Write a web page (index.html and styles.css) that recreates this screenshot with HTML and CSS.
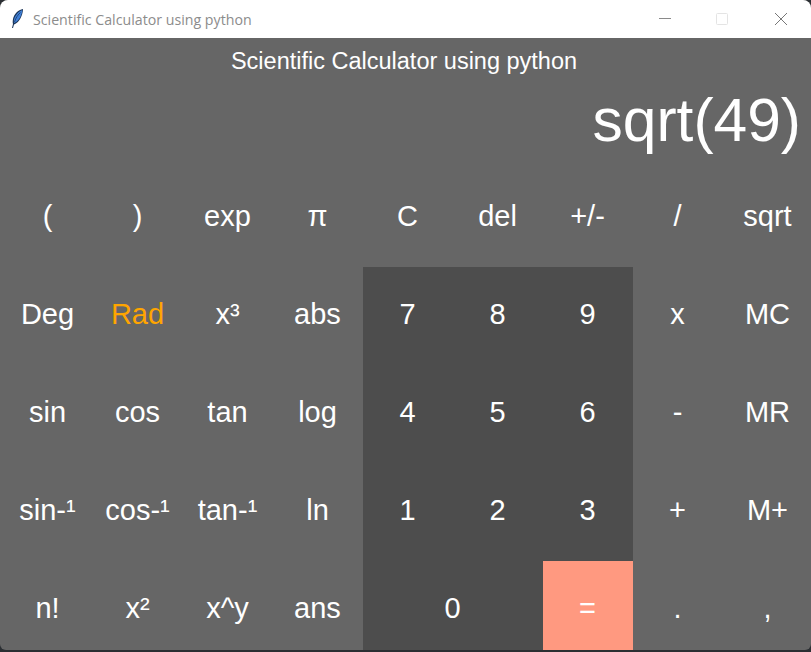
FILE: index.html
```html
<!DOCTYPE html>
<html lang="en">
<head>
    <meta charset="UTF-8">
    <meta name="viewport" content="width=device-width, initial-scale=1.0">
    <title>Scientific Calculator using python</title>
    <link rel="stylesheet" href="styles.css">
</head>
<body>
    <div class="window">
        <div class="titlebar">
            <svg class="feather" width="16" height="22" viewBox="0 0 16 22">
                <path d="M14 1 C9 2 5 6 4 11 C3.600 13 3.600 15 4 16 L3 20 L4 20 L5 16.500 C8 15.500 11 12 12.500 8 C13.500 5.500 14 3 14 1 Z" fill="#1c3558"/>
                <path d="M13.300 2 C9.500 3.500 6 7.500 5 11.500 C4.800 12.500 4.800 13.500 5 15 C8 14 10.800 11 12 7.500 C12.700 6 13.100 4 13.300 2 Z" fill="#3f7fd6"/>
                <path d="M11.500 4.500 C9 6.500 7 9.500 5.500 14" fill="none" stroke="#14263f" stroke-width="0.600"/>
            </svg>
            <span class="window-title">Scientific Calculator using python</span>
            <div class="window-controls">
                <svg class="control" width="46" height="38" viewBox="0 0 46 38">
                    <path d="M17 18.500 H29" stroke="#8a8a8a" stroke-width="1"/>
                </svg>
                <svg class="control" width="46" height="38" viewBox="0 0 46 38">
                    <rect x="16.500" y="13.500" width="11" height="11" rx="1" fill="none" stroke="#e4e4e4"/>
                </svg>
                <svg class="control" width="46" height="38" viewBox="0 0 46 38">
                    <path d="M17 13 L29 25 M29 13 L17 25" stroke="#777" stroke-width="1"/>
                </svg>
            </div>
        </div>
        <div class="calc">
            <h1 class="heading">Scientific Calculator using python</h1>
            <div class="display">sqrt(49)</div>
            <div class="keys">
                <button>(</button>
                <button>)</button>
                <button>exp</button>
                <button>π</button>
                <button>C</button>
                <button>del</button>
                <button>+/-</button>
                <button>/</button>
                <button>sqrt</button>

                <button>Deg</button>
                <button class="active">Rad</button>
                <button>x³</button>
                <button>abs</button>
                <button class="num">7</button>
                <button class="num">8</button>
                <button class="num">9</button>
                <button>x</button>
                <button>MC</button>

                <button>sin</button>
                <button>cos</button>
                <button>tan</button>
                <button>log</button>
                <button class="num">4</button>
                <button class="num">5</button>
                <button class="num">6</button>
                <button>-</button>
                <button>MR</button>

                <button>sin-¹</button>
                <button>cos-¹</button>
                <button>tan-¹</button>
                <button>ln</button>
                <button class="num">1</button>
                <button class="num">2</button>
                <button class="num">3</button>
                <button>+</button>
                <button>M+</button>

                <button>n!</button>
                <button>x²</button>
                <button>x^y</button>
                <button>ans</button>
                <button class="num zero">0</button>
                <button class="equals">=</button>
                <button>.</button>
                <button>,</button>
            </div>
        </div>
    </div>
</body>
</html>
```

FILE: styles.css
```css
/* Page */
html, body {
    margin: 0;
    height: 100%;
    overflow: hidden;
    background: #2b2f33;
}

.window {
    width: 811px;
    height: 650px;
    display: flex;
    flex-direction: column;
    overflow: hidden;
    border-radius: 8px 8px 6px 6px;
    background: #666666;
    font-family: "Liberation Sans", Arial, sans-serif;
    color: #ffffff;
}

/* Title bar */
.titlebar {
    flex: 0 0 38px;
    display: flex;
    align-items: center;
    background: #ffffff;
}

.feather {
    margin-left: 9px;
    margin-right: 8px;
}

.window-title {
    font-family: "Open Sans", sans-serif;
    font-size: 14.2px;
    color: #8c8c8c;
}

.window-controls {
    margin-left: auto;
    display: flex;
    gap: 12px;
    margin-right: 7px;
}

/* Calculator */
.calc {
    flex: 1;
    min-height: 0;
}

.heading {
    margin: 0 0 0 -3px;
    height: 46px;
    line-height: 46px;
    font-size: 23.5px;
    font-weight: normal;
    text-align: center;
}

.display {
    height: 85px;
    line-height: 72px;
    font-size: 60.5px;
    text-align: right;
    padding-right: 10px;
}

.keys {
    width: 813px;
    padding-left: 3px;
    box-sizing: border-box;
    display: grid;
    grid-template-columns: repeat(9, 90px);
    grid-auto-rows: 98px;
}

button {
    padding: 0 1px 3px 0;
    border: none;
    background: transparent;
    color: #ffffff;
    font-family: inherit;
    font-size: 29px;
    white-space: nowrap;
}

.num {
    background-color: #4d4d4d;
}

.zero {
    grid-column: span 2;
}

.equals {
    background-color: #ff9980;
}

.active {
    color: #ffa500;
}
```
